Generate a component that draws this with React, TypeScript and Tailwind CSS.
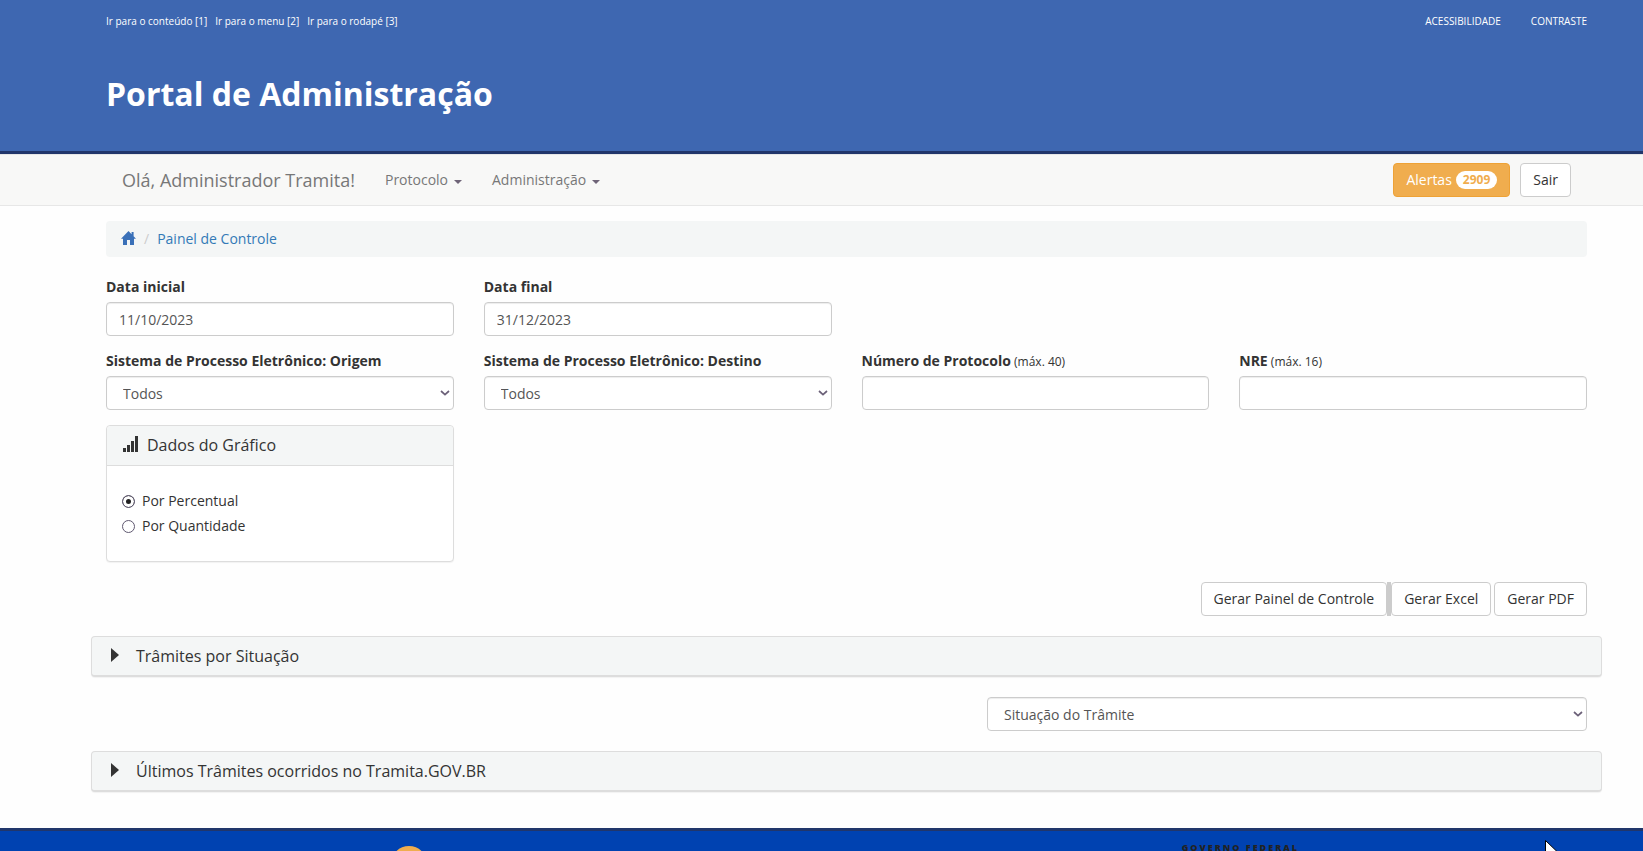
import React, { useState } from 'react';

const CONTROL =
  'block w-full h-[34px] rounded border border-[#ccc] bg-white text-sm leading-5 text-[#555] shadow-[inset_0_1px_1px_rgba(0,0,0,0.075)] outline-none focus:border-[#66afe9]';

const BUTTON =
  'h-[34px] px-3 rounded border border-[#ccc] bg-white text-sm leading-5 text-[#333] whitespace-nowrap hover:bg-[#e6e6e6]';

const RADIO =
  'appearance-none w-[13px] h-[13px] rounded-full border border-[#5f5870] bg-white checked:bg-[#222] checked:shadow-[inset_0_0_0_3px_#fff]';

const SISTEMAS = ['Todos', 'SEI', 'SUPER.GOV.BR', 'SAPIENS'];
const SITUACOES = ['Situação do Trâmite', 'Iniciado', 'Recebido', 'Recusado', 'Cancelado'];

interface FieldProps {
  id: string;
  label: string;
  hint?: string;
  children: React.ReactNode;
}

const Field: React.FC<FieldProps> = ({ id, label, hint, children }) => (
  <div>
    <label htmlFor={id} className="block mb-[5px] font-bold leading-5">
      {label}
      {hint && <small className="font-normal text-xs"> {hint}</small>}
    </label>
    {children}
  </div>
);

interface SelectProps {
  id: string;
  options: string[];
  label?: string;
}

const Select: React.FC<SelectProps> = ({ id, options, label }) => (
  <div className="relative">
    <select id={id} aria-label={label} className={`${CONTROL} appearance-none pt-[2px] pl-4 pr-6`}>
      {options.map((option) => (
        <option key={option}>{option}</option>
      ))}
    </select>
    <svg
      viewBox="0 0 10 6"
      className="absolute right-1 top-[14px] w-[10px] h-[6px] pointer-events-none"
      fill="none"
      stroke="#6b6078"
      strokeWidth="1.7"
    >
      <path d="M1 1l4 3.6L9 1" />
    </svg>
  </div>
);

const MenuItem: React.FC<{ label: string }> = ({ label }) => (
  <button type="button" className="flex items-center px-[15px] text-sm text-[#777] hover:text-[#333]">
    {label}
    <svg viewBox="0 0 8 4" className="ml-[6px] mt-1 w-2 h-1" fill="#6f6478">
      <path d="M0 0h8L4 4z" />
    </svg>
  </button>
);

const Panel: React.FC<{ title: string }> = ({ title }) => (
  <button
    type="button"
    className="flex items-center w-full h-[41px] pl-[19px] rounded border border-b-2 border-[#ddd] bg-[#f4f6f6] text-base text-[#333] text-left shadow-[0_1px_1px_rgba(0,0,0,0.05)]"
  >
    <svg viewBox="0 0 8 14" className="mb-[2px] w-2 h-[14px]" fill="#333">
      <path d="M0 0l8 7-8 7z" />
    </svg>
    <span className="ml-[17px]">{title}</span>
  </button>
);

const App: React.FC = () => {
  const [dataInicial, setDataInicial] = useState('11/10/2023');
  const [dataFinal, setDataFinal] = useState('31/12/2023');
  const [protocolo, setProtocolo] = useState('');
  const [nre, setNre] = useState('');
  const [modo, setModo] = useState('percentual');

  return (
    <div className="relative flex flex-col h-screen overflow-hidden bg-[#fefefe] font-['Open_Sans',sans-serif] text-sm leading-5 text-[#333]">
      <header className="h-[154px] shrink-0 pl-[106px] pr-14 bg-[#3e67b1] border-b-3 border-[#21366b] text-white">
        <div className="flex justify-between pt-[11px] text-[10px] font-medium">
          <nav className="flex gap-2">
            <a href="#conteudo">Ir para o conteúdo [1]</a>
            <a href="#menu">Ir para o menu [2]</a>
            <a href="#rodape">Ir para o rodapé [3]</a>
          </nav>
          <nav className="flex gap-[30px]">
            <a href="#acessibilidade">ACESSIBILIDADE</a>
            <a href="#contraste">CONTRASTE</a>
          </nav>
        </div>
        <h1 className="mt-[39px] text-[32px] leading-[48px] font-bold">Portal de Administração</h1>
      </header>

      <div
        id="menu"
        className="flex items-center h-[52px] shrink-0 pl-[122px] pr-[72px] bg-[#f8f8f7] border-y border-[#e7e7e7]"
      >
        <span className="mr-[15px] text-lg text-[#777]">Olá, Administrador Tramita!</span>
        <MenuItem label="Protocolo" />
        <MenuItem label="Administração" />
        <div className="flex gap-[10px] ml-auto">
          <button
            type="button"
            className="flex items-center h-[34px] px-3 rounded border border-[#eea236] bg-[#f0ad4e] text-sm text-white"
          >
            Alertas
            <span className="ml-1 px-[7px] h-[18px] rounded-[10px] bg-white text-[#f0ad4e] text-xs leading-[18px] font-bold">
              2909
            </span>
          </button>
          <button type="button" className={BUTTON}>
            Sair
          </button>
        </div>
      </div>

      <main id="conteudo" className="shrink-0 pl-[106px] pr-14 pt-[15px]">
        <nav className="flex items-center h-9 px-[15px] rounded bg-[#f4f6f6] text-[#337ab7]">
          <a href="#inicio" aria-label="Início" className="pb-[2px]">
            <svg viewBox="0 0 15 14" className="w-[15px] h-[14px]" fill="#3a70b8">
              <path d="M7.500 0L0 7.800h2V14h4V9h3v5h4V7.800h2L12.600 5.300V1h-2v2.200z" />
            </svg>
          </a>
          <span className="mx-2 text-[#ccc]">/</span>
          <a href="#painel">Painel de Controle</a>
        </nav>

        <form onSubmit={(e) => e.preventDefault()}>
          <div className="grid grid-cols-4 gap-x-[30px] gap-y-[15px] mt-5">
            <Field id="dataInicial" label="Data inicial">
              <input
                id="dataInicial"
                type="text"
                value={dataInicial}
                onChange={(e) => setDataInicial(e.target.value)}
                className={`${CONTROL} px-3`}
              />
            </Field>
            <Field id="dataFinal" label="Data final">
              <input
                id="dataFinal"
                type="text"
                value={dataFinal}
                onChange={(e) => setDataFinal(e.target.value)}
                className={`${CONTROL} px-3`}
              />
            </Field>
            <div className="col-span-2" />
            <Field id="origem" label="Sistema de Processo Eletrônico: Origem">
              <Select id="origem" options={SISTEMAS} />
            </Field>
            <Field id="destino" label="Sistema de Processo Eletrônico: Destino">
              <Select id="destino" options={SISTEMAS} />
            </Field>
            <Field id="protocolo" label="Número de Protocolo" hint="(máx. 40)">
              <input
                id="protocolo"
                type="text"
                maxLength={40}
                value={protocolo}
                onChange={(e) => setProtocolo(e.target.value)}
                className={`${CONTROL} px-3`}
              />
            </Field>
            <Field id="nre" label="NRE" hint="(máx. 16)">
              <input
                id="nre"
                type="text"
                maxLength={16}
                value={nre}
                onChange={(e) => setNre(e.target.value)}
                className={`${CONTROL} px-3`}
              />
            </Field>

            <section className="rounded border border-[#ddd] bg-white shadow-[0_1px_1px_rgba(0,0,0,0.05)]">
              <h2 className="flex items-center h-10 pl-4 pb-[2px] rounded-t border-b border-[#ddd] bg-[#f4f6f6] text-base">
                <svg viewBox="0 0 16 16" className="w-4 h-4 mr-2 mb-[2px]" fill="#333">
                  <path d="M0 12h3v4H0zM4 9h3v7H4zM8 5h3v11H8zM12 0h3v16h-3z" />
                </svg>
                Dados do Gráfico
              </h2>
              <div className="flex flex-col gap-[5px] px-[15px] py-[25px]">
                <label className="flex items-center gap-[7px]">
                  <input
                    type="radio"
                    name="modo"
                    checked={modo === 'percentual'}
                    onChange={() => setModo('percentual')}
                    className={RADIO}
                  />
                  Por Percentual
                </label>
                <label className="flex items-center gap-[7px]">
                  <input
                    type="radio"
                    name="modo"
                    checked={modo === 'quantidade'}
                    onChange={() => setModo('quantidade')}
                    className={RADIO}
                  />
                  Por Quantidade
                </label>
              </div>
            </section>
          </div>

          <div className="flex justify-end mt-5">
            <button type="submit" className={BUTTON}>
              Gerar Painel de Controle
            </button>
            <span className="w-1 bg-[#ccc]" />
            <button type="button" className={`${BUTTON} mr-[3px]`}>
              Gerar Excel
            </button>
            <button type="button" className={BUTTON}>
              Gerar PDF
            </button>
          </div>
        </form>

        <div className="-mx-[15px] mt-5">
          <Panel title="Trâmites por Situação" />
        </div>
        <div className="flex justify-end my-5">
          <div className="w-[600px]">
            <Select id="situacao" options={SITUACOES} label="Situação do Trâmite" />
          </div>
        </div>
        <div className="-mx-[15px]">
          <Panel title="Últimos Trâmites ocorridos no Tramita.GOV.BR" />
        </div>
      </main>

      <footer
        id="rodape"
        className="flex shrink-0 mt-9 pt-3 pl-[391px] pr-[344px] justify-between items-start bg-[#0042b1] border-t-3 border-[#21366b]"
      >
        <svg viewBox="0 0 36 36" className="mt-[3px] w-9 h-9" fill="#f0ad4e">
          <circle cx="18" cy="18" r="18" />
        </svg>
        <span className="text-[9px] leading-[10px] font-extrabold tracking-[2px] text-[#222]">GOVERNO FEDERAL</span>
      </footer>

      <svg viewBox="0 0 12 19" className="absolute left-[1545px] top-[840px] w-3 h-[19px]" fill="#fff" stroke="#000">
        <path d="M.5.5v16l4-4 2.500 6 2.500-1-2.500-6H12z" />
      </svg>
    </div>
  );
};

export default App;
